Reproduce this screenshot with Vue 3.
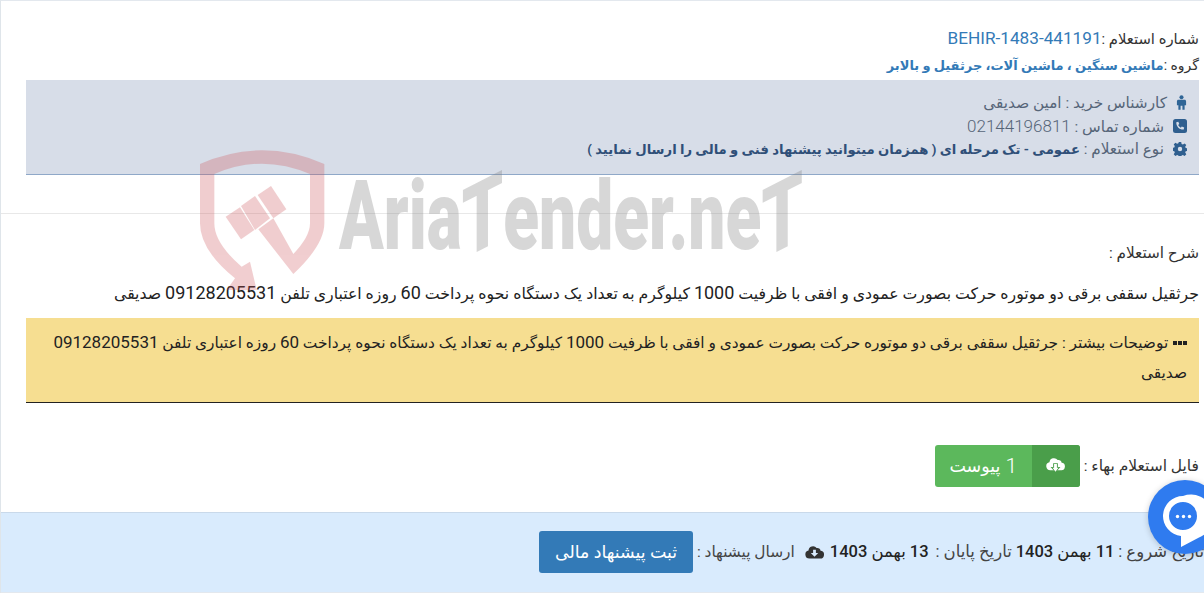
<script setup>
const desc = 'جرثقیل سقفی برقی دو موتوره حرکت بصورت عمودی و افقی با ظرفیت 1000 کیلوگرم به تعداد یک دستگاه نحوه پرداخت 60 روزه اعتباری تلفن 09128205531 صدیقی'
const parts = desc.split(/(\d+)/).map((text, i) => ({ text, digit: i % 2 === 1 }))
</script>

<template>
  <div class="page" dir="rtl">
    <section class="head">
      <div class="line-no">شماره استعلام :<span class="code" dir="ltr">BEHIR-1483-441191</span></div>
      <div class="line-group">گروه :<b>ماشین سنگین ، ماشین آلات، جرثقیل و بالابر</b></div>
      <div class="info">
        <div class="row">
          <span class="ic-box narrow"><svg viewBox="0 0 12 16" width="11" height="15"><circle cx="6" cy="2.2" r="2.2" fill="#2f6596"/><path d="M2.600 5h6.800c.9 0 1.600.7 1.600 1.600V11H9.400v5H7V11.500H5V16H2.600v-5H1V6.600C1 5.700 1.700 5 2.600 5z" fill="#2f6596"/></svg></span>
          <span>کارشناس خرید : امین صدیقی</span>
        </div>
        <div class="row">
          <span class="ic-box"><svg viewBox="0 0 14 14" width="14" height="14"><rect width="14" height="14" rx="2.500" fill="#2f5f8f"/><path d="M3.300 3.200l2-.5 1 2.400-1.200 1c.6 1.200 1.500 2.100 2.700 2.700l1-1.200 2.400 1-.5 2c-4.200.3-7.700-3.200-7.400-7.400z" fill="#d8dee8"/></svg></span>
          <span>شماره تماس : <span class="num">02144196811</span></span>
        </div>
        <div class="row">
          <span class="ic-box"><svg viewBox="0 0 14 14" width="14" height="14"><path fill-rule="evenodd" d="M5.800 0h2.400l.4 2 1.300.5 1.700-1.100 1.700 1.700-1.100 1.700.5 1.300 2 .4v2.400l-2 .4-.5 1.300 1.100 1.700-1.700 1.700-1.700-1.100-1.300.5-.4 2H5.800l-.4-2-1.300-.5-1.700 1.100-1.700-1.700 1.100-1.700-.5-1.300-2-.4V5.800l2-.4.500-1.300-1.100-1.700 1.700-1.700 1.700 1.100 1.300-.5zM7 4.800a2.200 2.200 0 1 0 0 4.400 2.200 2.200 0 0 0 0-4.400z" fill="#2f5f8f"/></svg></span>
          <span>نوع استعلام : <b>عمومی - تک مرحله ای ( همزمان میتوانید پیشنهاد فنی و مالی را ارسال نمایید )</b></span>
        </div>
      </div>
    </section>

    <section class="body">
      <div class="label">شرح استعلام :</div>
      <div class="desc"><template v-for="p in parts"><span v-if="p.digit" class="d">{{ p.text }}</span><template v-else>{{ p.text }}</template></template></div>
      <div class="more"><span class="dots"><i></i><i></i><i></i></span> توضیحات بیشتر : <template v-for="p in parts"><span v-if="p.digit" class="d">{{ p.text }}</span><template v-else>{{ p.text }}</template></template></div>
      <div class="file">
        <span>فایل استعلام بهاء :</span>
        <div class="btn-green">
          <span class="btn-ic">
            <svg viewBox="0 0 20 18" width="19" height="17"><path d="M4.500 14A4.300 4.300 0 0 1 3.600 5.500 4.800 4.800 0 0 1 12.300 3.300 3.300 3.300 0 0 1 16.500 6.200 3.900 3.900 0 0 1 15.500 14H4.500z" fill="#fff"/><path d="M7.500 6.500h5v4h2.700L10 16.500 4.800 10.500h2.700z" fill="#4a9e4a"/><path d="M8.500 7.500h3v4h1.600L10 15.500 6.900 11.500h1.600z" fill="#fff"/></svg>
          </span>
          <span class="btn-txt"><span class="big">1</span> پیوست</span>
        </div>
      </div>
    </section>

    <footer class="foot">
      <span class="dates"><span class="lbl">تاریخ شروع :</span> <b>11 بهمن 1403</b> <span class="lbl">تاریخ پایان :</span> <b class="wide">13 بهمن 1403</b></span>
      <svg class="dl" viewBox="0 0 20 15" width="19" height="14"><path fill-rule="evenodd" d="M4.500 14.500A4.300 4.300 0 0 1 3.600 6 4.800 4.800 0 0 1 12.300 3.300 3.300 3.300 0 0 1 16.500 6.200 4.100 4.100 0 0 1 15.500 14.500H4.500zM8.500 5v3.500H6l4 4 4-4h-2.500V5h-3z" fill="#333"/></svg>
      <span>ارسال پیشنهاد :</span>
      <span class="btn-blue">ثبت پیشنهاد مالی</span>
    </footer>

    <div class="wm" aria-hidden="true" dir="ltr">
      <svg class="shield" viewBox="0 0 420 420" width="140" height="140">
        <g fill="#cd5055" opacity=".28">
          <path d="M15 42Q200-40 388 42V220Q388 285 295 372L190 238 235 205 295 312Q345 260 345 220V72Q200 10 58 72V220Q58 280 140 350L165 335 185 420H95L120 385Q15 300 15 220Z"/>
          <path d="M92 200 135 172 178 240 138 268Z"/>
          <path d="M138 168 180 138 225 205 180 240Z"/>
          <path d="M188 135 228 108 274 178 235 205Z"/>
        </g>
      </svg>
      <div class="wm-text">Aria<span class="t">T</span>ender.ne<span class="t">T</span></div>
    </div>

    <div class="chat">
      <svg viewBox="0 0 74 74" width="74" height="74">
        <path fill-rule="evenodd" d="M35 16a20 20 0 0 0-2 39.900V67L51 57.500A20 20 0 0 0 35 16zm0 6a14 14 0 1 1 0 28 14 14 0 0 1 0-28z" fill="#fff"/>
        <circle cx="29.500" cy="36.500" r="1.700" fill="#fff"/><circle cx="35.500" cy="36.500" r="1.700" fill="#fff"/><circle cx="41.500" cy="36.500" r="1.700" fill="#fff"/>
      </svg>
    </div>
  </div>
</template>

<style>
html, body { margin: 0; background: #fff; overflow: hidden; }
</style>

<style scoped>
.page {
  position: relative;
  width: 1204px;
  height: 593px;
  box-sizing: border-box;
  border-top: 1px solid #e3e8ee;
  border-left: 1px solid #dfe5ea;
  overflow: hidden;
  font-family: Roboto, "DejaVu Sans", sans-serif;
  font-size: 14px;
  color: #333;
}
.head {
  height: 213px;
  box-sizing: border-box;
  padding: 24px 5px 0 0;
  border-bottom: 1px solid #e8e8e8;
}
.line-no { font-size: 14.800px; line-height: 26px; }
.code { font-size: 17.200px; color: #337ab7; }
.line-group { font-size: 14px; line-height: 26px; }
.line-group b { font-size: 13px; color: #337ab7; font-weight: 700; }
.info {
  margin-top: 1px;
  width: 1173px;
  height: 95px;
  box-sizing: border-box;
  padding: 11px 12px 0 0;
  background: #d7dde8;
  border-bottom: 1px solid #8fa8c8;
  color: #566578;
}
.row { display: flex; align-items: center; gap: 9px; height: 23px; font-size: 15.300px; }
.ic-box { width: 14px; display: flex; justify-content: flex-start; flex: none; }
.ic-box.narrow { width: 11px; }
.num { font-size: 17px; font-weight: 300; }
.row b { font-size: 13.200px; color: #2f4f78; }
.body { padding: 26px 5px 0 0; }
.label { font-size: 15.300px; line-height: 26px; }
.desc { font-size: 15.750px; line-height: 24px; margin-top: 15px; color: #222; white-space: nowrap; }
.desc .d { font-size: 18px; letter-spacing: -.3px; }
.more {
  margin-top: 12px;
  width: 1173px;
  height: 85px;
  box-sizing: border-box;
  padding: 9px 12px 0 24px;
  background: #f6de91;
  border-bottom: 1px solid #222;
  line-height: 30px;
  font-size: 15.400px;
  color: #222;
}
.more .d { font-size: 17px; }
.dots { display: inline-flex; gap: 1px; margin-left: 1px; vertical-align: 3px; }
.dots i { width: 4px; height: 4px; background: #222; }
.file { display: flex; align-items: center; gap: 4px; margin-top: 41px; height: 43px; font-size: 15.500px; }
.btn-green {
  display: flex;
  width: 145px;
  height: 42px;
  background: #5cb85c;
  border-radius: 3px;
  color: #fff;
  overflow: hidden;
}
.btn-ic {
  width: 48px;
  background: #4a9e4a;
  display: flex;
  align-items: center;
  justify-content: center;
}
.btn-txt { flex: 1; display: flex; align-items: center; justify-content: center; gap: 5px; font-size: 17.500px; }
.big { font-size: 21px; font-weight: 300; }
.foot {
  position: absolute;
  left: 0; right: 0; top: 511px;
  height: 81px;
  box-sizing: border-box;
  padding: 18px 0 0 0;
  background: #d9ebfd;
  border-top: 1px solid #c9d9ea;
  border-bottom: 1px solid #e3e8ee;
  display: flex;
  align-items: flex-start;
  gap: 9px;
  font-size: 15.400px;
  line-height: 42px;
  color: #444;
}
.lbl { font-size: 16.500px; }
.foot b { font-size: 16.500px; color: #222; font-weight: 500; }
.foot b.wide { margin-right: 3px; }
.dl { margin-top: 14px; margin-right: -3px; margin-left: 1px; }
.btn-blue {
  width: 154px;
  height: 42px;
  margin-right: -5px;
  background: #337ab7;
  border-radius: 3px;
  color: #fff;
  text-align: center;
  font-size: 17.400px;
}
.wm {
  position: absolute;
  left: 194px;
  top: 149px;
  width: 620px;
  height: 140px;
  pointer-events: none;
}
.shield { position: absolute; left: 0; top: 0; }
.wm-text {
  position: absolute;
  left: 144px;
  top: 10px;
  font-family: Roboto, sans-serif;
  font-weight: 900;
  font-size: 97px;
  line-height: 112px;
  color: #7c7c7c;
  opacity: .3;
  transform-origin: left center;
  transform: scaleX(.678);
  white-space: nowrap;
}
.t { display: inline-block; transform: skewY(-19deg); }
.chat {
  position: absolute;
  left: 1147px;
  top: 479px;
  width: 74px;
  height: 74px;
  border-radius: 50%;
  background: #2f7bef;
  box-shadow: 0 1px 6px rgba(0,0,0,.2);
}
.chat svg { display: block; }
</style>
